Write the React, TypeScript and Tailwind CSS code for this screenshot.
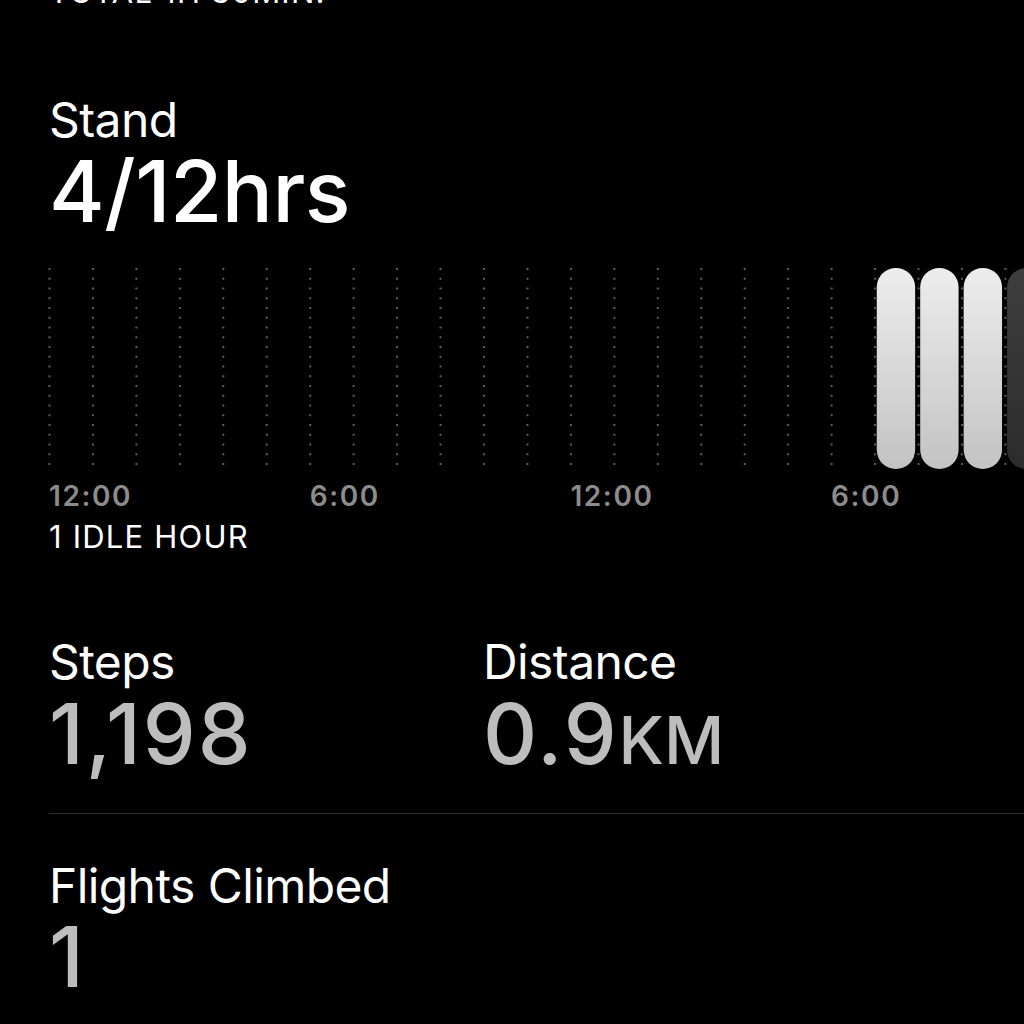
const COL = 43.45;
const DOT_ROWS = 21;

function StandChart() {
  const cols = Array.from({ length: 24 }, (_, k) => k);
  const rows = Array.from({ length: DOT_ROWS }, (_, r) => r);
  // hours with a stand logged; 22 is the current (unfinished) hour
  const stood = [19, 20, 21];
  const current = 22;

  return (
    <svg width={1050} height={202} className="block overflow-visible">
      <defs>
        <linearGradient id="bar-on" x1="0" y1="0" x2="0" y2="1">
          <stop offset="0" stopColor="#ededed" />
          <stop offset="1" stopColor="#c3c3c3" />
        </linearGradient>
        <linearGradient id="bar-now" x1="0" y1="0" x2="0" y2="1">
          <stop offset="0" stopColor="#3e3e3e" />
          <stop offset="1" stopColor="#2c2c2c" />
        </linearGradient>
      </defs>
      {cols.map((k) =>
        rows.map((r) => (
          <rect
            key={`${k}-${r}`}
            x={k * COL - 0.5}
            y={r * 9.75}
            width={2}
            height={2}
            fill="#5c5c5c"
          />
        )),
      )}
      {stood.map((k) => (
        <rect key={k} x={k * COL + 2.2} y={0} width={38.4} height={201} rx={19.2} fill="url(#bar-on)" />
      ))}
      <rect x={current * COL + 2.2} y={0} width={38.4} height={201} rx={19.2} fill="url(#bar-now)" />
    </svg>
  );
}

function Metric({ label, value, unit }: { label: string; value: string; unit?: string }) {
  return (
    <div>
      <div className="text-[48px] leading-[48px] tracking-[-0.6px] text-white">{label}</div>
      <div className="mt-[5.8px] h-[84px] text-[84px] leading-[84px] font-medium tracking-[2px] text-[#bdbdbd]">
        {value}
        {unit ? <span className="text-[66px] leading-none tracking-[0px]">{unit}</span> : null}
      </div>
    </div>
  );
}

export default function App() {
  return (
    <div
      className="w-[1024px] h-[1024px] overflow-hidden bg-black pl-[49px] text-white"
      style={{ fontFamily: 'Inter, "Noto Sans", sans-serif' }}
    >
      <div className="mt-[-24px] h-[31px] text-[31px] leading-[31px] tracking-[1.2px]">TOTAL 1H 30MIN.</div>

      <div className="mt-[88.5px] text-[48px] leading-[48px] tracking-[-0.6px]">Stand</div>
      <div className="mt-[5px] text-[85px] leading-[85px] font-medium tracking-[-0.5px]">4/12hrs</div>

      <div className="mt-[34.4px]">
        <StandChart />
      </div>

      <div className="mt-[12px] flex h-[28px] text-[28px] leading-[28px] font-semibold tracking-[1.6px] text-[#8c8c8c]">
        <span className="w-[260.7px] shrink-0">12:00</span>
        <span className="w-[260.7px] shrink-0">6:00</span>
        <span className="w-[260.7px] shrink-0">12:00</span>
        <span className="w-[260.7px] shrink-0">6:00</span>
      </div>
      <div className="mt-[11.5px] h-[31px] text-[31px] leading-[31px] tracking-[1.2px]">1 IDLE HOUR</div>

      <div className="mt-[86px] grid grid-cols-[434px_1fr]">
        <Metric label="Steps" value="1,198" />
        <Metric label="Distance" value="0.9" unit="KM" />
      </div>

      <div className="mt-[36.6px] h-px bg-[#2e2e2e]" />

      <div className="mt-[48.6px]">
        <div className="text-[48px] leading-[48px] tracking-[-0.6px]">Flights Climbed</div>
        <div className="mt-[4.8px] text-[84px] leading-[84px] font-medium text-[#bdbdbd]">1</div>
      </div>
    </div>
  );
}
